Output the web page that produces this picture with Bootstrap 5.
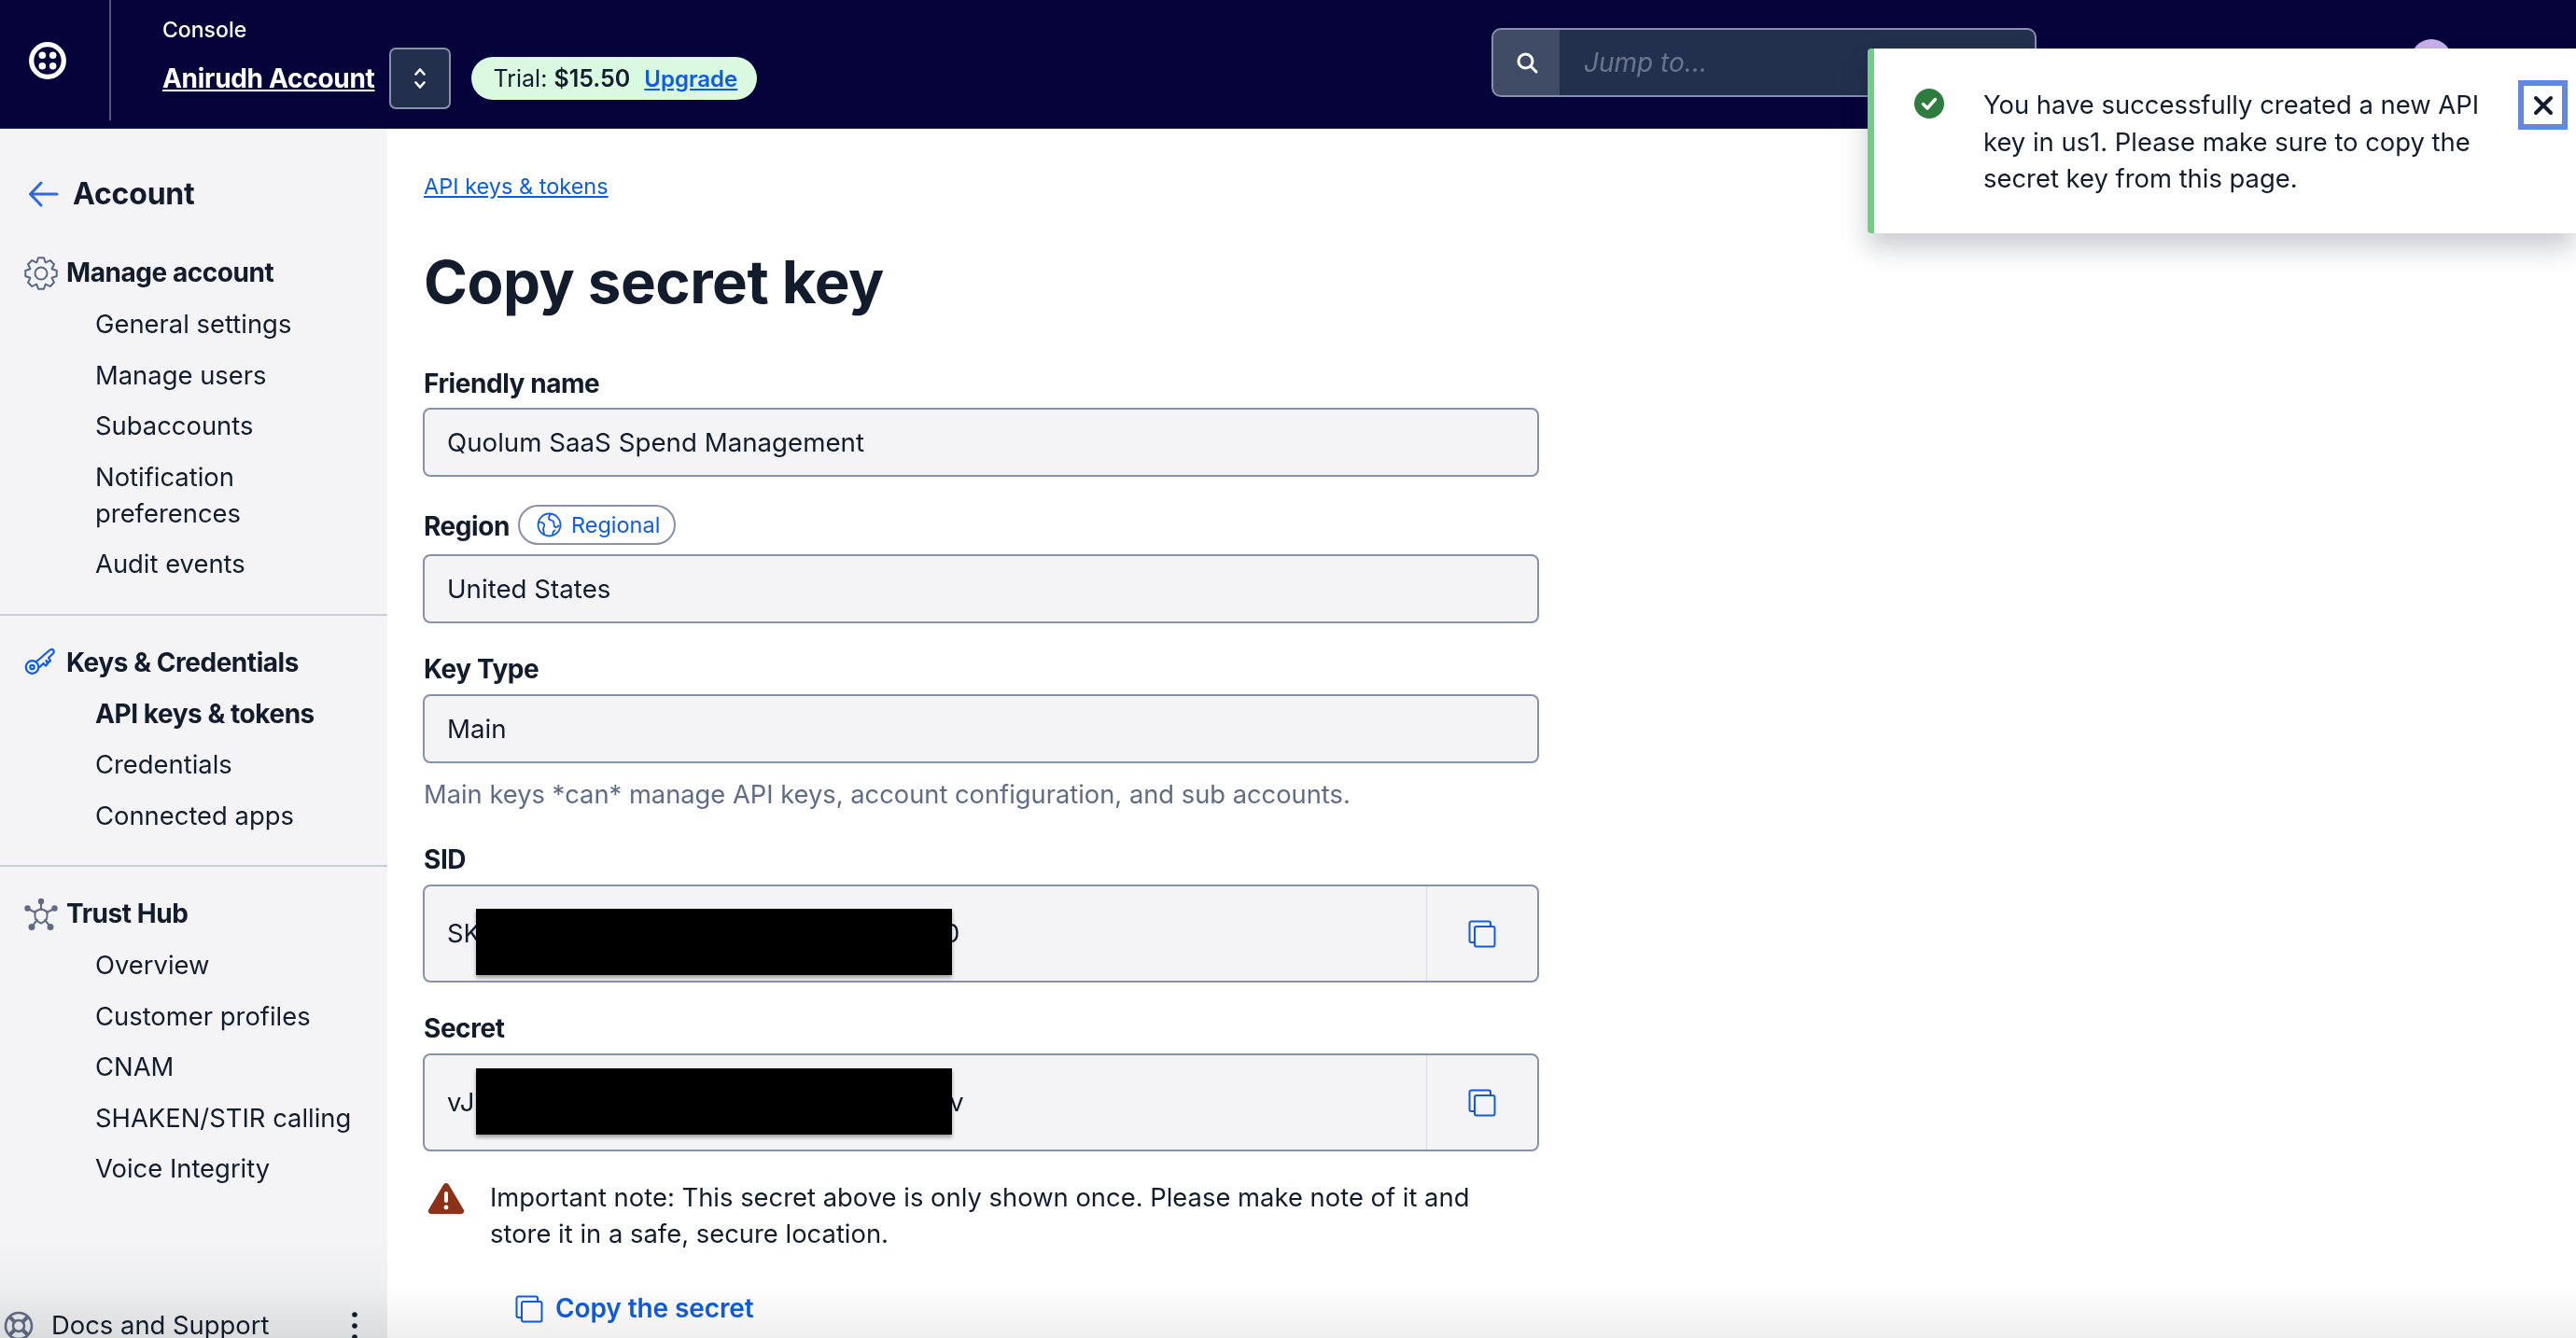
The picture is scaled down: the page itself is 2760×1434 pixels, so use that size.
<!DOCTYPE html>
<html lang="en">
<head>
  <meta charset="UTF-8" />
  <title>Copy secret key</title>
  <link href="https://cdn.jsdelivr.net/npm/bootstrap@5.3.0/dist/css/bootstrap.min.css" rel="stylesheet" />
  <style>
    html, body { height: 100%; }
    body { font-family: Inter, "Liberation Sans", sans-serif; color: #121c2d; font-size: 27.4px; line-height: 39px; overflow: hidden; background: #fff; position: relative; }
    a { color: #0f5ce0; }
    .top-bar { height: 138px; background: #06033a; border-bottom: 1px solid #1a1a33; padding: 0; align-items: flex-start; justify-content: flex-start; flex-wrap: nowrap; }
    .logo-cell { width: 119px; height: 129px; border-right: 2px solid #59587a; padding-left: 30px; flex: none; }
    .acct-cell { padding: 19px 0 0 55px; }
    .console-txt { color: #fff; font-size: 23px; line-height: 27px; font-weight: 500; }
    .acct-row { margin-top: 5px; }
    .acct-name { color: #fff; font-size: 28px; line-height: 34px; font-weight: 700; letter-spacing: -0.3px; }
    .step-btn { width: 66px; height: 66px; margin-left: 16px; padding: 0; background: #22304d; border: 2px solid #8891aa; border-radius: 7px; }
    .trial-pill { margin-left: 22px; height: 46px; width: 306px; background: #d9f9e0; color: #121c2d; border-radius: 23px; font-size: 25px; font-weight: 400; line-height: 46px; padding: 0 23px; text-align: left; }
    .trial-pill b { font-weight: 600; }
    .trial-pill a { margin-left: 8px; font-size: 24px; font-weight: 600; }
    .jump-box { position: absolute; left: 1598px; top: 30px; width: 584px; height: 74px; }
    .jump-box .input-group-text { width: 74px; background: #404b66; border: 2px solid #8891aa; border-right: 1px solid #8891aa; border-radius: 10px 0 0 10px; justify-content: center; padding: 0; }
    .jump-box .form-control { background: #22304d; border: 2px solid #8891aa; border-left: 0; border-radius: 0 10px 10px 0; color: #6b7590; font-style: italic; font-size: 28px; padding: 0 26px; line-height: 70px; }
    .avatar-dot { position: absolute; left: 2583px; top: 42px; width: 44px; height: 44px; border-radius: 50%; background: #c9b0ea; }

    .page-body { height: calc(100% - 138px); }
    .side-col { width: 415px; flex: none; background: linear-gradient(to bottom, #f4f4f6 calc(100% - 110px), #e9eaec 100%); position: relative; }
    .back-row { padding: 50px 0 0 30px; height: 110px; }
    .back-row span { font-size: 32px; font-weight: 700; margin-left: 15px; line-height: 40px; letter-spacing: -0.2px; }
    .side-group { padding: 0 0 18px; border-bottom: 2px solid #cacdd8; margin-bottom: 31px; }
    .side-group.first-group { margin-top: 25px; }
    .side-group.no-line { border-bottom: 0; margin: 0; padding: 0; }
    .group-head { font-weight: 700; font-size: 28px; height: 39px; line-height: 39px; padding-left: 26px; margin-bottom: 16px; letter-spacing: -0.45px; }
    .group-head svg { flex: none; width: 36px; margin-right: 9px; }
    .side-col .nav-link { color: #121c2d; padding: 0 0 0 102px; line-height: 39px; margin-bottom: 15.5px; font-size: 27.4px; }
    .side-col .nav-link.active-item { font-weight: 700; font-size: 28px; letter-spacing: -0.45px; }
    .side-foot { position: absolute; left: 4px; right: 32px; top: 1263px; height: 39px; }
    .side-foot .foot-txt { margin-left: 19px; flex: 1; }

    .main-col { padding: 42px 0 0 38px; width: 1250px; }
    .crumb-link { font-size: 23.500px; line-height: 39px; display: block; margin-left: 1px; }
    .page-title { font-size: 63.600px; line-height: 78px; font-weight: 700; margin: 44px 0 0 1px; letter-spacing: -0.5px; }
    .fld-label { font-weight: 700; font-size: 28px; line-height: 39px; margin: 0; letter-spacing: -0.45px; padding-left: 1px; }
    .label-friendly { display: block; margin: 51px 0 6px; }
    .label-region { display: flex; align-items: center; margin: 32px 0 8px; }
    .label-type { display: block; margin: 30px 0 7px; }
    .label-sid { display: block; margin: 31px 0 7px; }
    .label-secret { display: block; margin: 30px 0 7px; }
    .fld-box { height: 74px; background: #f4f4f6; border: 2px solid #8891aa; border-radius: 8px; font-size: 27.700px; line-height: 70px; padding: 0 24px; color: #121c2d; width: 1196px; }
    .region-chip { display: inline-flex; align-items: center; height: 43px; width: 169px; border: 2px solid #8891aa; border-radius: 22px; color: #0f5ce0; background: #fff; font-size: 23.500px; font-weight: 400; letter-spacing: 0; padding: 0 0 0 18px; margin-left: 9px; position: relative; top: -2px; }
    .region-chip svg { margin-right: 10px; }
    .help-txt { color: #606b85; line-height: 39px; margin-top: 14px; padding-left: 1px; font-size: 27.300px; }
    .copy-group { width: 1196px; height: 105px; background: #f4f4f6; border: 2px solid #8891aa; border-radius: 8px; position: relative; }
    .copy-val { flex: 1; padding-left: 24px; line-height: 101px; }
    .gap-sid { display: inline-block; width: 496px; }
    .gap-sec { display: inline-block; width: 509px; }
    .copy-btn { width: 119px; border: 0; border-left: 1px solid #d8dbe3; border-radius: 0; background: transparent; padding: 0; }
    .black-out { position: absolute; left: 55px; width: 510px; height: 71px; background: #000; box-shadow: 0 3px 4px rgba(0,0,0,.35); }
    .black-sid { top: 24px; }
    .black-sec { top: 14px; }
    .note-row { margin-top: 30px; width: 1196px; padding-left: 5px; }
    .note-row svg { flex: none; margin-right: 27px; margin-top: 3px; }
    .note-txt { width: 1100px; }
    .copy-link { font-weight: 600; font-size: 28px; text-decoration: none; margin: 41px 0 0 99px; letter-spacing: -0.1px; }
    .copy-link svg { margin-right: 13px; }

    .done-toast { position: absolute; left: 2001px; top: 52px; width: 759px; height: 198px; margin: 0; padding: 41px 0 0 43px; background: #fff; border: 0; border-left: 7px solid #6ed07f; border-radius: 4px 0 0 4px; box-shadow: 0 16px 28px rgba(18,28,45,.22); color: #121c2d; z-index: 5; }
    .done-toast svg.ok-ic { flex: none; margin: 2px 42px 0 0; }
    .done-toast p { margin: 0; width: 545px; line-height: 39.5px; }
    .x-btn { position: absolute; left: 690px; top: 34px; width: 53px; height: 53px; padding: 0; background: #fff; border: 6px solid #6388e0; border-radius: 0; display: flex; align-items: center; justify-content: center; }
    .fade-bottom { position: absolute; left: 0; right: 0; bottom: 0; height: 56px; background: linear-gradient(to bottom, #fff, #efefef); mix-blend-mode: multiply; pointer-events: none; }
  </style>
</head>
<body>
  <nav class="navbar top-bar">
    <div class="logo-cell d-flex align-items-center">
      <svg width="42" height="42" viewBox="0 0 40 40"><circle cx="20" cy="20" r="16.500" fill="none" stroke="#fff" stroke-width="5"/><circle cx="14.600" cy="14.600" r="3.600" fill="#fff"/><circle cx="25.400" cy="14.600" r="3.600" fill="#fff"/><circle cx="14.600" cy="25.400" r="3.600" fill="#fff"/><circle cx="25.400" cy="25.400" r="3.600" fill="#fff"/></svg>
    </div>
    <div class="acct-cell">
      <div class="console-txt">Console</div>
      <div class="acct-row d-flex align-items-center">
        <a href="#" class="acct-name">Anirudh Account</a>
        <button class="btn step-btn d-flex align-items-center justify-content-center" type="button">
          <svg width="16" height="26" viewBox="0 0 16 26" fill="none" stroke="#fff" stroke-width="2.600" stroke-linecap="round" stroke-linejoin="round"><path d="M3.500 8.500 8 3.500l4.500 5M3.500 17.500 8 22.500l4.500-5"/></svg>
        </button>
        <span class="badge trial-pill">Trial: <b>$15.50</b> <a href="#">Upgrade</a></span>
      </div>
    </div>
    <div class="jump-box input-group">
      <span class="input-group-text"><svg width="26" height="26" viewBox="0 0 26 26" fill="none" stroke="#fff" stroke-width="3" stroke-linecap="round"><circle cx="11.500" cy="11.500" r="7.500"/><path d="m17 17 6 6"/></svg></span>
      <div class="form-control">Jump to...</div>
    </div>
    <div class="avatar-dot"></div>
  </nav>

  <div class="page-body d-flex">
    <aside class="side-col">
      <div class="back-row d-flex align-items-start">
        <svg width="33" height="40" viewBox="0 0 33 40" fill="none" stroke="#2f67dd" stroke-width="3" stroke-linecap="round" stroke-linejoin="round"><path d="M31 20H3M14 8 2.500 20 14 32"/></svg>
        <span>Account</span>
      </div>

      <div class="side-group first-group">
        <div class="group-head d-flex align-items-center">
          <svg height="36" viewBox="0 0 36 36" fill="none" stroke="#5a6783" stroke-width="2" stroke-linejoin="round"><circle cx="18" cy="18" r="6.500"/><path d="M15.050 1.260h5.900L22.780 6.450 27.750 4.070l4.180 4.180-2.380 4.970 5.190 1.830v5.900l-5.190 1.830 2.380 4.970-4.180 4.180-4.970-2.380-1.830 5.190h-5.900l-1.830-5.190-4.970 2.380-4.180-4.180 2.380-4.970-5.190-1.830v-5.900l5.190-1.830-2.380-4.970 4.180-4.180 4.970 2.380z"/></svg>
          Manage account
        </div>
        <nav class="nav flex-column">
          <a class="nav-link" href="#">General settings</a>
          <a class="nav-link" href="#">Manage users</a>
          <a class="nav-link" href="#">Subaccounts</a>
          <a class="nav-link" href="#">Notification<br />preferences</a>
          <a class="nav-link" href="#">Audit events</a>
        </nav>
      </div>

      <div class="side-group">
        <div class="group-head d-flex align-items-center">
          <svg height="32" viewBox="0 0 36 32" fill="none" stroke="#0f5ce0" stroke-width="2.200" stroke-linejoin="round"><circle cx="8.500" cy="21" r="6.800"/><circle cx="8.500" cy="21" r="2.200"/><path d="M12.500 15.500 27 3c1-1 3-1.500 4-.5s.8 3-.2 4L26 11l2 3-2 2-2.500-2 1.500 3.500-2 2-2.500-2.500-4.500 4.500"/></svg>
          Keys &amp; Credentials
        </div>
        <nav class="nav flex-column">
          <a class="nav-link active-item" href="#">API keys &amp; tokens</a>
          <a class="nav-link" href="#">Credentials</a>
          <a class="nav-link" href="#">Connected apps</a>
        </nav>
      </div>

      <div class="side-group no-line">
        <div class="group-head d-flex align-items-center">
          <svg height="36" viewBox="0 0 36 36" fill="#606b85" stroke="#606b85" stroke-width="2" stroke-linecap="round"><path fill="none" d="M18 5v8M4 12l8 4M32 12l-8 4M8 31l6-7M28 31l-6-7"/><path fill="none" stroke-linejoin="round" d="M18 12l6.500 3v5c0 4-3 6-6.500 7.500-3.500-1.500-6.500-3.500-6.500-7.500v-5z"/><circle cx="18" cy="4" r="2.200"/><circle cx="3.500" cy="11.500" r="2.200"/><circle cx="32.500" cy="11.500" r="2.200"/><circle cx="8" cy="31.500" r="2.500"/><circle cx="28" cy="31.500" r="2.500"/></svg>
          Trust Hub
        </div>
        <nav class="nav flex-column">
          <a class="nav-link" href="#">Overview</a>
          <a class="nav-link" href="#">Customer profiles</a>
          <a class="nav-link" href="#">CNAM</a>
          <a class="nav-link" href="#">SHAKEN/STIR calling</a>
          <a class="nav-link" href="#">Voice Integrity</a>
        </nav>
      </div>

      <div class="side-foot d-flex align-items-center">
        <svg width="32" height="32" viewBox="0 0 32 32" fill="none" stroke="#606b85" stroke-width="2.600"><circle cx="16" cy="16" r="14"/><circle cx="16" cy="16" r="6"/><path stroke-width="4" d="m6 6 6 6M26 6l-6 6M6 26l6-6M26 26l-6-6"/></svg>
        <span class="foot-txt">Docs and Support</span>
        <svg width="6" height="36" viewBox="0 0 6 36" fill="#121c2d"><circle cx="3" cy="6" r="2.800"/><circle cx="3" cy="18" r="2.800"/><circle cx="3" cy="30" r="2.800"/></svg>
      </div>
    </aside>

    <main class="main-col">
      <a class="crumb-link" href="#">API keys &amp; tokens</a>
      <h1 class="page-title">Copy secret key</h1>

      <label class="fld-label label-friendly">Friendly name</label>
      <div class="fld-box">Quolum SaaS Spend Management</div>

      <label class="fld-label label-region">Region<span class="region-chip">
        <svg width="27" height="27" viewBox="0 0 27 27" fill="none" stroke="#0f5ce0" stroke-width="1.800" stroke-linejoin="round"><circle cx="13.500" cy="13.500" r="12"/><path d="M2 11c3-1 5 0 6 2 1 2-1 3-1 5s1 3 1 6M15 2c-1 2-3 3-2 5s4 1 5 3 0 3 1 5 3 1 5-1M17 25c0-3 1-5 3-6"/></svg>Regional</span></label>
      <div class="fld-box">United States</div>

      <label class="fld-label label-type">Key Type</label>
      <div class="fld-box">Main</div>
      <div class="help-txt">Main keys *can* manage API keys, account configuration, and sub accounts.</div>

      <label class="fld-label label-sid">SID</label>
      <div class="copy-group d-flex">
        <div class="copy-val"><span>SK</span><span class="gap-sid"></span><span>0</span></div>
        <button class="btn copy-btn" type="button" aria-label="Copy SID">
          <svg width="30" height="30" viewBox="0 0 30 30" fill="none" stroke="#0f5ce0" stroke-width="2"><path d="M6.500 24H3.500a2 2 0 0 1-2-2V3.500a2 2 0 0 1 2-2H22a2 2 0 0 1 2 2v3"/><rect x="7" y="7" width="21.500" height="21.500" rx="2"/></svg>
        </button>
        <div class="black-out black-sid"></div>
      </div>

      <label class="fld-label label-secret">Secret</label>
      <div class="copy-group d-flex">
        <div class="copy-val"><span>vJ</span><span class="gap-sec"></span><span>v</span></div>
        <button class="btn copy-btn" type="button" aria-label="Copy secret">
          <svg width="30" height="30" viewBox="0 0 30 30" fill="none" stroke="#0f5ce0" stroke-width="2"><path d="M6.500 24H3.500a2 2 0 0 1-2-2V3.500a2 2 0 0 1 2-2H22a2 2 0 0 1 2 2v3"/><rect x="7" y="7" width="21.500" height="21.500" rx="2"/></svg>
        </button>
        <div class="black-out black-sec"></div>
      </div>

      <div class="note-row d-flex">
        <svg width="40" height="34" viewBox="0 0 40 34"><path fill="#8d3118" d="M20 1c1.300 0 2.300.7 3 1.900l15.800 26.600c1.200 2.100-.2 4.500-2.600 4.500H3.800c-2.400 0-3.800-2.400-2.600-4.500L17 2.900C17.700 1.700 18.700 1 20 1z"/><rect x="18" y="10" width="4" height="12" rx="2" fill="#fff"/><circle cx="20" cy="27" r="2.400" fill="#fff"/></svg>
        <div class="note-txt">Important note: This secret above is only shown once. Please make note of it and store it in a safe, secure location.</div>
      </div>

      <a class="copy-link d-flex align-items-center" href="#">
        <svg width="30" height="30" viewBox="0 0 30 30" fill="none" stroke="#0f5ce0" stroke-width="2"><path d="M6.500 24H3.500a2 2 0 0 1-2-2V3.500a2 2 0 0 1 2-2H22a2 2 0 0 1 2 2v3"/><rect x="7" y="7" width="21.500" height="21.500" rx="2"/></svg>
        Copy the secret
      </a>
    </main>
  </div>

  <div class="fade-bottom"></div>

  <div class="alert done-toast d-flex" role="alert">
    <svg class="ok-ic" width="32" height="32" viewBox="0 0 32 32"><circle cx="16" cy="16" r="16" fill="#2e7d3e"/><path d="m9.500 16.500 4.500 4.500 8.500-9.500" fill="none" stroke="#fff" stroke-width="3.400" stroke-linecap="round" stroke-linejoin="round"/></svg>
    <p>You have successfully created a new API key in us1. Please make sure to copy the secret key from this page.</p>
    <button class="x-btn" type="button" aria-label="Close">
      <svg width="24" height="24" viewBox="0 0 24 24" fill="none" stroke="#121c2d" stroke-width="4" stroke-linecap="round"><path d="m4 4 16 16M20 4 4 20"/></svg>
    </button>
  </div>
</body>
</html>
